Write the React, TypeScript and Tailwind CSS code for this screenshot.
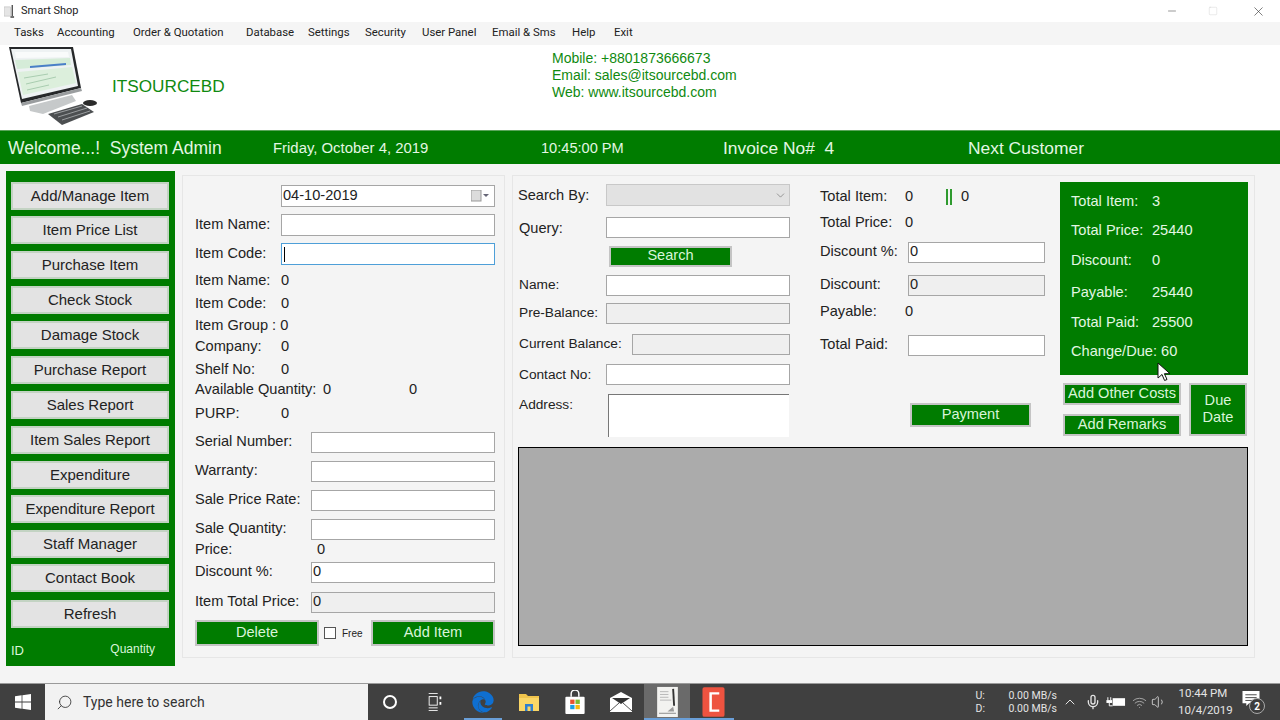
import { ChevronDown, ChevronUp, Mic, Search, Volume1, Wifi, X, Minus, Square } from "lucide-react";
import { FaEdge } from "react-icons/fa";
import type { ReactNode } from "react";

const menuItems = [
  { label: "Tasks", w: "w-[43px]" },
  { label: "Accounting", w: "w-[76px]" },
  { label: "Order & Quotation", w: "w-[113px]" },
  { label: "Database", w: "w-[62px]" },
  { label: "Settings", w: "w-[57px]" },
  { label: "Security", w: "w-[57px]" },
  { label: "User Panel", w: "w-[70px]" },
  { label: "Email & Sms", w: "w-[80px]" },
  { label: "Help", w: "w-[42px]" },
  { label: "Exit", w: "w-[30px]" },
];

const sideButtons = [
  { label: "Add/Manage Item", mt: "mt-0" },
  { label: "Item Price List", mt: "mt-[6px]" },
  { label: "Purchase Item", mt: "mt-[7px]" },
  { label: "Check Stock", mt: "mt-[7px]" },
  { label: "Damage Stock", mt: "mt-[7px]" },
  { label: "Purchase Report", mt: "mt-[7px]" },
  { label: "Sales Report", mt: "mt-[7px]" },
  { label: "Item Sales Report", mt: "mt-[7px]" },
  { label: "Expenditure", mt: "mt-[7px]" },
  { label: "Expenditure Report", mt: "mt-[6px]" },
  { label: "Staff Manager", mt: "mt-[7px]" },
  { label: "Contact Book", mt: "mt-[6px]" },
  { label: "Refresh", mt: "mt-[8px]" },
];

function Row({ mt, children, className = "" }: { mt: string; children: ReactNode; className?: string }) {
  return <div className={`flex h-5 items-center ${mt} ${className}`}>{children}</div>;
}

function Field({ className, value = "", disabled = false }: { className: string; value?: string; disabled?: boolean }) {
  return (
    <div className={`flex h-[21px] shrink-0 items-center border border-[#a6a6a6] pl-[1px] ${disabled ? "bg-[#efefef]" : "bg-white"} ${className}`}>
      {value}
    </div>
  );
}

function GreenButton({ children, className }: { children: ReactNode; className: string }) {
  return (
    <div className={`flex items-center justify-center border-[2px] border-[#c4c4c4] bg-[#007c00] text-[#d9f5d9] ${className}`}>
      {children}
    </div>
  );
}

function StatRow({ label, value, className }: { label: string; value: string; className: string }) {
  return (
    <div className={`flex h-5 items-center ${className}`}>
      <span className="w-[81px]">{label}</span>
      <span>{value}</span>
    </div>
  );
}

function Logo() {
  return (
    <svg viewBox="0 45 100 85" className="h-[85px] w-[100px] shrink-0">
      <polygon points="9,47 73,47 81,88 21,103" fill="#26282a" />
      <polygon points="11,49 71,49 78,86 22,99" fill="#eef2f3" />
      <polygon points="15,52 68,52 69,57 16,58" fill="#f9fbfb" />
      <polygon points="15,60 70,58 71,65 17,69" fill="#d5ecd8" />
      <polygon points="30,66 66,63 66,65 30,68" fill="#4a7fc8" />
      <polygon points="18,72 72,67 76,83 23,95" fill="#dcefdc" />
      <path d="M24 78l24-4M26 84l30-7M27 90l22-5" stroke="#a9cdb0" strokeWidth="1" />
      <polygon points="21,103 81,88 82,91 22,106" fill="#9a9d9f" />
      <polygon points="29,106 72,95 76,101 43,114 30,111" fill="#c6c9ca" />
      <polygon points="48,114 82,104 94,112 62,125" fill="#4c4f51" />
      <path d="M54 114l28-8M58 117l29-9M62 120l28-9" stroke="#9a9d9f" strokeWidth="1" />
      <ellipse cx="90" cy="103" rx="7" ry="3" fill="#2b2b2b" />
    </svg>
  );
}

function WindowsLogo() {
  return (
    <svg viewBox="0 0 16 16" className="h-[16px] w-[16px]" fill="#fff">
      <polygon points="0,2.3 6.6,1.3 6.6,7.6 0,7.6" />
      <polygon points="7.4,1.2 16,0 16,7.6 7.4,7.6" />
      <polygon points="0,8.4 6.6,8.4 6.6,14.7 0,13.7" />
      <polygon points="7.4,8.4 16,8.4 16,16 7.4,14.8" />
    </svg>
  );
}

function TaskView() {
  return (
    <svg viewBox="0 0 16 20" className="h-[18px] w-[16px]" fill="none" stroke="#fff" strokeWidth="1">
      <path d="M1 .5h10M1 19.5h10M1 16.5h10" />
      <rect x="1.5" y="4" width="9" height="9.5" />
      <path d="M14 4v3M14 10v3" strokeWidth="2" />
    </svg>
  );
}

function FolderIcon() {
  return (
    <svg viewBox="0 0 22 20" className="h-[22px] w-[22px]">
      <path d="M1 2h7l2 2h11v15H1z" fill="#f0c44c" />
      <path d="M1 6h20v13H1z" fill="#fad666" />
      <rect x="7" y="12" width="8" height="7" fill="#2f7fd0" />
      <rect x="9.5" y="14.5" width="3" height="4.5" fill="#fad666" />
    </svg>
  );
}

function StoreIcon() {
  return (
    <svg viewBox="0 0 22 26" className="h-[25px] w-[22px]">
      <path d="M7 7V4a4 4 0 0 1 8 0v3" fill="none" stroke="#fff" strokeWidth="1.5" />
      <rect x="1" y="7" width="20" height="18" rx="1" fill="#fff" />
      <rect x="6" y="10" width="4.5" height="4.5" fill="#e8502f" />
      <rect x="11.5" y="10" width="4.5" height="4.5" fill="#7db92e" />
      <rect x="6" y="15.5" width="4.5" height="4.5" fill="#1c9ee2" />
      <rect x="11.5" y="15.5" width="4.5" height="4.5" fill="#f6b90e" />
    </svg>
  );
}

function MailIcon() {
  return (
    <svg viewBox="0 0 22 20" className="h-[20px] w-[22px]">
      <path d="M0 6 11 0l11 6v14H0z" fill="#fff" />
      <path d="M2 6h18l-9 6z" fill="#333" />
      <path d="M0 19 9 11M22 19l-9-8" stroke="#555" strokeWidth="1" />
    </svg>
  );
}

function NotesIcon() {
  return (
    <svg viewBox="0 0 24 34" className="h-[32px] w-[23px]">
      <rect x="1" y="1" width="22" height="32" fill="#f2f2f0" />
      <path d="M4 6h9M4 9h9M4 12h9M4 15h12" stroke="#b5b5b5" strokeWidth="1" />
      <path d="M18 3l1 18" stroke="#333" strokeWidth="2" />
      <path d="M12 27l6-5 1 5z" fill="#9a9a9a" />
      <path d="M3 29h18" stroke="#888" strokeWidth="1" />
    </svg>
  );
}

function CamtasiaIcon() {
  return (
    <svg viewBox="0 0 24 32" className="h-[32px] w-[23px]">
      <rect x="0.5" y="0.5" width="23" height="31" rx="2" fill="#ee5340" />
      <path d="M18 7H9v18h9" fill="none" stroke="#fff" strokeWidth="2.6" />
    </svg>
  );
}

function BatteryIcon() {
  return (
    <svg viewBox="0 0 22 14" className="h-[14px] w-[21px]" fill="#fff">
      <rect x="8" y="3" width="13" height="8" />
      <path d="M3 2v3M6 2v3" stroke="#fff" strokeWidth="1" />
      <rect x="1.5" y="5" width="6" height="3" />
      <path d="M4.5 8v3H8" fill="none" stroke="#fff" strokeWidth="1" />
    </svg>
  );
}

function NoticeIcon() {
  return (
    <div className="relative ml-[14px] h-[22px] w-[22px] shrink-0">
      <svg viewBox="0 0 18 18" className="h-[17px] w-[18px]" fill="#fff">
        <path d="M0 0h18v13H7l-3 3v-3H0z" />
        <path d="M3 4h12M3 7h12M3 10h8" stroke="#444" strokeWidth="1" />
      </svg>
      <div className="absolute left-[7px] top-[7px] flex h-[16px] w-[16px] items-center justify-center rounded-full border border-[#aaa] bg-[#3d3d3d] text-[10px] font-bold text-white">
        2
      </div>
    </div>
  );
}

function Cursor() {
  return (
    <svg viewBox="0 0 14 20" className="absolute left-[1157px] top-[362px] h-[20px] w-[14px]">
      <path d="M1 1v15l4-3.5 2.6 6 2.4-1-2.6-5.8H13z" fill="#fff" stroke="#111" strokeWidth="1" />
    </svg>
  );
}

export default function App() {
  return (
    <div className="relative flex h-[720px] w-[1280px] flex-col overflow-hidden bg-[#f4f4f4] font-['Liberation_Sans',Arial,sans-serif] text-[14.6px] text-[#222]">
      {/* title bar */}
      <div className="flex h-[22px] items-center bg-white font-['Roboto',sans-serif] text-[11px] text-[#222]">
        <svg viewBox="0 0 12 14" className="ml-[4px] h-[13px] w-[11px]">
          <rect x="0" y="2" width="7" height="10" fill="#e5e5e5" stroke="#aaa" strokeWidth="0.5" />
          <path d="M9 0v12M7 13h4" stroke="#444" strokeWidth="1.4" />
        </svg>
        <span className="ml-[6px]">Smart Shop</span>
        <div className="ml-auto flex items-center">
          <Minus size={12} strokeWidth={1} className="mr-[30px] text-[#333]" />
          <Square size={10} strokeWidth={1} className="mr-[33px] text-[#ccc]" />
          <X size={15} strokeWidth={1} className="mr-[14px] text-[#333]" />
        </div>
      </div>

      {/* menu */}
      <div className="flex h-[23px] items-center bg-[#f5f5f5] pb-[2px] pl-[14px] font-['Roboto',sans-serif] text-[11.4px] text-[#222]">
        {menuItems.map((item) => (
          <span key={item.label} className={`whitespace-nowrap ${item.w}`}>
            {item.label}
          </span>
        ))}
      </div>

      {/* header */}
      <div className="flex h-[85px] bg-white">
        <Logo />
        <div className="ml-[12px] mt-[29px] w-[440px] text-[17.2px] text-[#108a10]">ITSOURCEBD</div>
        <div className="mt-[5px] text-[14px] leading-[17px] text-[#108a10]">
          <div>Mobile: +8801873666673</div>
          <div>Email: sales@itsourcebd.com</div>
          <div>Web: www.itsourcebd.com</div>
        </div>
      </div>

      {/* welcome band */}
      <div className="flex h-[34px] items-center border-t border-[#5aa55a] bg-[#007c00] pl-[8px] pt-[2px] text-[#e3f7e3]">
        <span className="w-[265px] whitespace-pre text-[17.5px]">Welcome...!  System Admin</span>
        <span className="w-[268px] text-[14.9px]">Friday, October 4, 2019</span>
        <span className="w-[182px]">10:45:00 PM</span>
        <span className="w-[245px] whitespace-pre text-[17.4px]">Invoice No#  4</span>
        <span className="text-[17.4px]">Next Customer</span>
      </div>

      {/* main */}
      <div className="flex h-[519px]">
        <div className="ml-[6px] mt-[7px] flex h-[495px] w-[169px] shrink-0 flex-col bg-[#007c00] px-[5px] pt-[11px]">
          {sideButtons.map((b) => (
            <div key={b.label} className={`flex h-[28px] w-[158px] shrink-0 items-center justify-center border-[2px] border-[#c3d3c3] bg-[#e3e3e3] text-[15px] ${b.mt}`}>
              {b.label}
            </div>
          ))}
          <div className="mt-[11px] flex items-center justify-between pr-[15px] text-[12px] text-[#d9f5d9]">
            <span className="mt-[2px] text-[13px]">ID</span>
            <span className="-mt-[2px]">Quantity</span>
          </div>
        </div>

        {/* item form */}
        <div className="ml-[7px] mt-[11px] h-[483px] w-[323px] shrink-0 border border-[#e6e6e6] pl-[12px] pt-[10px]">
          <Row mt="mt-0">
            <div className="ml-[86px] flex h-[22px] w-[214px] items-center border border-[#a6a6a6] bg-white pl-[1px] pr-[5px]">
              <span>04-10-2019</span>
              <svg viewBox="0 0 18 12" className="ml-auto h-[12px] w-[18px]">
                <rect x="0" y="0" width="10" height="11" fill="#dcdcdc" stroke="#999" strokeWidth="1" />
                <path d="M12 4h6l-3 3z" fill="#667" />
              </svg>
            </div>
          </Row>
          <Row mt="mt-[9px]">
            <span className="w-[86px]">Item Name:</span>
            <Field className="h-[22px] w-[214px]" />
          </Row>
          <Row mt="mt-[9px]">
            <span className="w-[86px]">Item Code:</span>
            <div className="flex h-[22px] w-[214px] items-center border border-[#4e9fd8] bg-white pl-[2px]">
              <div className="h-[15px] w-[1px] bg-black" />
            </div>
          </Row>
          <Row mt="mt-[7px]">
            <span className="w-[86px]">Item Name:</span>
            <span>0</span>
          </Row>
          <Row mt="mt-[3px]">
            <span className="w-[86px]">Item Code:</span>
            <span>0</span>
          </Row>
          <Row mt="mt-[2px]">
            <span className="whitespace-nowrap">Item Group : 0</span>
          </Row>
          <Row mt="mt-[1px]">
            <span className="w-[86px]">Company:</span>
            <span>0</span>
          </Row>
          <Row mt="mt-[3px]">
            <span className="w-[86px]">Shelf No:</span>
            <span>0</span>
          </Row>
          <Row mt="mt-0">
            <span className="w-[128px] whitespace-nowrap">Available Quantity:</span>
            <span className="w-[86px]">0</span>
            <span>0</span>
          </Row>
          <Row mt="mt-[4px]">
            <span className="w-[86px]">PURP:</span>
            <span>0</span>
          </Row>
          <Row mt="mt-[8px]">
            <span className="w-[116px]">Serial Number:</span>
            <Field className="w-[184px]" />
          </Row>
          <Row mt="mt-[9px]">
            <span className="w-[116px]">Warranty:</span>
            <Field className="w-[184px]" />
          </Row>
          <Row mt="mt-[9px]">
            <span className="w-[116px]">Sale Price Rate:</span>
            <Field className="w-[184px]" />
          </Row>
          <Row mt="mt-[9px]">
            <span className="w-[116px]">Sale Quantity:</span>
            <Field className="w-[184px]" />
          </Row>
          <Row mt="mt-[1px]">
            <span className="w-[122px]">Price:</span>
            <span>0</span>
          </Row>
          <Row mt="mt-[2px]">
            <span className="w-[116px]">Discount %:</span>
            <Field className="w-[184px]" value="0" />
          </Row>
          <Row mt="mt-[10px]">
            <span className="w-[116px]">Item Total Price:</span>
            <Field className="w-[184px]" value="0" disabled />
          </Row>
          <div className="mt-[8px] flex h-[26px] items-center">
            <GreenButton className="h-[26px] w-[124px]">Delete</GreenButton>
            <div className="ml-[5px] h-[12px] w-[12px] border border-[#555] bg-white" />
            <span className="ml-[6px] w-[19px] text-[10px]">Free</span>
            <GreenButton className="ml-[10px] h-[26px] w-[124px]">Add Item</GreenButton>
          </div>
        </div>

        {/* customer + totals */}
        <div className="ml-[7px] mt-[11px] flex h-[483px] w-[743px] shrink-0 flex-col border border-[#e6e6e6] pl-[5px] pt-[6px]">
          <div className="flex h-[255px] shrink-0">
            <div className="w-[272px] shrink-0 pt-[3px]">
              <Row mt="mt-0">
                <span className="mt-[2px] w-[89px]">Search By:</span>
                <div className="flex h-[22px] w-[184px] shrink-0 items-center justify-end border border-[#c8c8c8] bg-[#e2e2e2] pr-[2px]">
                  <ChevronDown size={13} strokeWidth={1} className="text-[#555]" />
                </div>
              </Row>
              <Row mt="mt-[13px]">
                <span className="ml-[1px] mt-[2px] w-[88px]">Query:</span>
                <Field className="-mt-[2px] h-[20px] w-[184px]" />
              </Row>
              <Row mt="mt-[8px]">
                <GreenButton className="ml-[91px] h-[21px] w-[123px]">Search</GreenButton>
              </Row>
              <Row mt="mt-[9px]">
                <span className="ml-[1px] w-[88px] text-[13.7px]">Name:</span>
                <Field className="h-[20px] w-[184px]" />
              </Row>
              <Row mt="mt-[8px]">
                <span className="ml-[1px] w-[88px] text-[13.7px]">Pre-Balance:</span>
                <Field className="h-[20px] w-[184px]" disabled />
              </Row>
              <Row mt="mt-[11px]">
                <span className="ml-[1px] w-[114px] whitespace-nowrap text-[13.7px]">Current Balance:</span>
                <Field className="h-[20px] w-[158px]" disabled />
              </Row>
              <Row mt="mt-[10px]">
                <span className="ml-[1px] mt-[2px] w-[88px] text-[13.7px]">Contact No:</span>
                <Field className="h-[20px] w-[184px]" />
              </Row>
              <div className="mt-[10px] flex items-start">
                <span className="ml-[1px] mt-[1px] w-[89px] text-[13.7px]">Address:</span>
                <div className="h-[43px] w-[181px] border-l border-t border-[#777] bg-white" />
              </div>
            </div>

            <div className="ml-[30px] w-[225px] shrink-0 pt-[5px]">
              <Row mt="mt-0">
                <span className="w-[85px]">Total Item:</span>
                <span className="w-[41px]">0</span>
                <div className="h-[16px] w-[6px] border-x-2 border-[#2f9a2f]" />
                <span className="ml-[9px]">0</span>
              </Row>
              <Row mt="mt-[6px]">
                <span className="w-[85px]">Total Price:</span>
                <span>0</span>
              </Row>
              <Row mt="mt-[9px]">
                <span className="w-[88px]">Discount %:</span>
                <Field className="w-[137px]" value="0" />
              </Row>
              <Row mt="mt-[13px]">
                <span className="w-[88px]">Discount:</span>
                <Field className="w-[137px]" value="0" disabled />
              </Row>
              <Row mt="mt-[7px]">
                <span className="w-[85px]">Payable:</span>
                <span>0</span>
              </Row>
              <Row mt="mt-[13px]">
                <span className="w-[88px]">Total Paid:</span>
                <Field className="w-[137px]" />
              </Row>
              <Row mt="mt-[50px]">
                <GreenButton className="ml-[90px] h-[24px] w-[121px]">Payment</GreenButton>
              </Row>
            </div>

            <div className="ml-[15px] w-[188px] shrink-0">
              <div className="h-[193px] bg-[#007c00] pl-[11px] pt-[10px] text-[#e3f7e3]">
                <StatRow label="Total Item:" value="3" className="mt-0" />
                <StatRow label="Total Price:" value="25440" className="mt-[9px]" />
                <StatRow label="Discount:" value="0" className="mt-[10px]" />
                <StatRow label="Payable:" value="25440" className="mt-[12px]" />
                <StatRow label="Total Paid:" value="25500" className="mt-[10px]" />
                <div className="mt-[9px] flex h-5 items-center">Change/Due: 60</div>
              </div>
              <div className="mt-[8px] flex">
                <div className="ml-[3px] flex w-[118px] flex-col">
                  <GreenButton className="h-[22px] whitespace-nowrap">Add Other Costs</GreenButton>
                  <GreenButton className="mt-[9px] h-[22px] whitespace-nowrap">Add Remarks</GreenButton>
                </div>
                <GreenButton className="ml-[8px] h-[53px] w-[58px] pb-[2px] text-center leading-[17px]">
                  Due
                  <br />
                  Date
                </GreenButton>
              </div>
            </div>
          </div>

          <div className="mt-[10px] h-[199px] w-[730px] shrink-0 border border-black bg-[#ababab]" />
        </div>
      </div>

      {/* taskbar */}
      <div className="flex h-[37px] items-center border-t border-[#9a9a9a] bg-[#404040] font-['Roboto',sans-serif] text-white">
        <div className="flex h-full w-[45px] items-center justify-center">
          <WindowsLogo />
        </div>
        <div className="flex h-full w-[323px] items-center bg-[#f2f2f2] pl-[11px] text-[14px] text-[#333]">
          <Search size={17} strokeWidth={1.2} className="-scale-x-100" />
          <span className="ml-[10px]">Type here to search</span>
        </div>
        <div className="ml-[15px] h-[14px] w-[14px] rounded-full border-[2px] border-white" />
        <div className="ml-[30px]">
          <TaskView />
        </div>
        <div className="relative ml-[17px] flex h-full w-[46px] items-center justify-center text-[#0f6fd0]">
          <FaEdge size={22} />
          <div className="absolute bottom-0 left-[4px] h-[2px] w-[38px] bg-[#6a9fd8]" />
        </div>
        <div className="flex h-full w-[46px] items-center justify-center">
          <FolderIcon />
        </div>
        <div className="flex h-full w-[46px] items-center justify-center">
          <StoreIcon />
        </div>
        <div className="flex h-full w-[46px] items-center justify-center">
          <MailIcon />
        </div>
        <div className="relative flex h-full w-[46px] items-center justify-center bg-[#6a6a6a]">
          <NotesIcon />
          <div className="absolute bottom-0 left-0 h-[2px] w-full bg-[#6a9fd8]" />
        </div>
        <div className="relative flex h-full w-[46px] items-center justify-center">
          <CamtasiaIcon />
          <div className="absolute bottom-0 left-[0px] h-[2px] w-[44px] bg-[#6a9fd8]" />
        </div>

        <div className="ml-auto flex h-full items-center pr-[16px] text-[#e4e4e4]">
          <div className="text-[10.5px] leading-[13px]">
            <div>U:</div>
            <div>D:</div>
          </div>
          <div className="ml-[22px] w-[50px] text-right text-[10.5px] leading-[13px]">
            <div>0.00 MB/s</div>
            <div>0.00 MB/s</div>
          </div>
          <ChevronUp size={16} strokeWidth={1.5} className="ml-[5px]" />
          <Mic size={16} strokeWidth={2} className="ml-[7px]" />
          <div className="ml-[4px]">
            <BatteryIcon />
          </div>
          <Wifi size={15} strokeWidth={1.5} className="ml-[6px] text-[#aaa]" />
          <Volume1 size={16} strokeWidth={1.2} className="ml-[4px]" />
          <div className="ml-[11px] w-[50px] text-center text-[11.5px] leading-[17px]">
            <div>10:44 PM</div>
            <div>10/4/2019</div>
          </div>
          <NoticeIcon />
        </div>
      </div>

      <Cursor />
    </div>
  );
}
